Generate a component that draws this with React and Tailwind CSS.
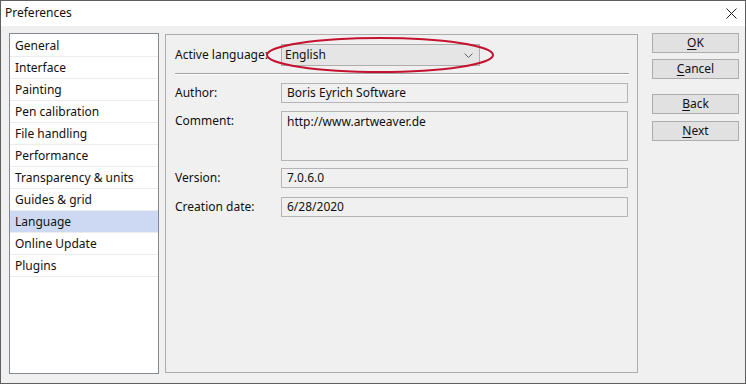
import { useState } from 'react';

const pages = [
  'General',
  'Interface',
  'Painting',
  'Pen calibration',
  'File handling',
  'Performance',
  'Transparency & units',
  'Guides & grid',
  'Language',
  'Online Update',
  'Plugins',
];

const Field = ({ label, value, tall, className = '' }) => (
  <div className={`flex ${tall ? 'items-start' : 'items-center'} ${className}`}>
    <div className={`w-[106px] shrink-0 ${tall ? 'pt-[1px]' : ''}`}>{label}</div>
    <div
      className={`flex-1 border border-[#b4b4b4] bg-[#f0f0f0] pl-[5px] ${
        tall ? 'h-[50px] pt-[1px]' : 'h-[20px] flex items-center'
      }`}
    >
      {value}
    </div>
  </div>
);

const DlgButton = ({ hot, rest, className = '' }) => (
  <button className={`h-[20px] w-[87px] border border-[#adadad] bg-[#e1e1e1] text-center leading-[18px] ${className}`}>
    <span className="underline underline-offset-2">{hot}</span>
    {rest}
  </button>
);

export default function App() {
  const [active, setActive] = useState('Language');

  return (
    <div
      className="w-[746px] h-[384px] border border-[#5f5f5f] bg-[#f0f0f0] text-[12px] text-[#111] flex flex-col"
      style={{ fontFamily: '"Noto Sans", "Liberation Sans", sans-serif' }}
    >
      {/* Title bar */}
      <div className="h-[25px] bg-white flex items-center justify-between pl-[4px] pr-[8px] pb-[1px] shrink-0">
        <span className="text-[12px]">Preferences</span>
        <svg width="11" height="11" viewBox="0 0 11 11">
          <path d="M0.5 0.5 L10.5 10.5 M10.5 0.5 L0.5 10.5" stroke="#222" strokeWidth="1" />
        </svg>
      </div>

      <div className="flex flex-1 pt-[7px] pl-[8px] pr-[6px] pb-[9px]">
        {/* Category list */}
        <div className="w-[150px] border border-[#828790] bg-white flex flex-col pt-[1px]">
          {pages.map((p) => (
            <div
              key={p}
              onClick={() => setActive(p)}
              className={`h-[22px] shrink-0 flex items-center pl-[5px] border-b border-[#ececec] ${
                active === p ? 'bg-[#cdd9f3]' : ''
              }`}
            >
              {p}
            </div>
          ))}
        </div>

        {/* Language page */}
        <div className="ml-[6px] w-[473px] mb-[1px] mt-[1px] border border-[#acacac] px-[9px] pt-[9px] flex flex-col relative">
          <div className="flex items-center h-[22px]">
            <div className="w-[106px] shrink-0">Active language:</div>
            <div className="w-[199px] h-[22px] border border-[#adadad] bg-[#e5e5e5] flex items-center justify-between pl-[3px] pr-[6px]">
              <span>English</span>
              <svg width="9" height="5" viewBox="0 0 9 5">
                <path d="M0.5 0.5 L4.5 4.5 L8.5 0.5" fill="none" stroke="#606060" strokeWidth="1" />
              </svg>
            </div>
          </div>
          <div className="mt-[7px] mr-[-1px] h-[2px] border-t border-[#a0a0a0] border-b border-b-white" />
          <Field label="Author:" value="Boris Eyrich Software" className="mt-[7px] h-[21px]" />
          <Field label="Comment:" value="http://www.artweaver.de" tall className="mt-[8px]" />
          <Field label="Version:" value="7.0.6.0" className="mt-[7px]" />
          <Field label="Creation date:" value="6/28/2020" className="mt-[9px]" />

          {/* red highlight ring */}
          <svg className="absolute left-[100px] top-0 pointer-events-none" width="232" height="40" viewBox="0 0 232 40">
            <ellipse cx="114" cy="20" rx="113" ry="17" fill="none" stroke="#c4122f" strokeWidth="2" />
          </svg>
        </div>

        {/* Dialog buttons */}
        <div className="ml-[14px] flex flex-col">
          <DlgButton hot="O" rest="K" />
          <DlgButton hot="C" rest="ancel" className="mt-[6px]" />
          <DlgButton hot="B" rest="ack" className="mt-[15px]" />
          <DlgButton hot="N" rest="ext" className="mt-[7px]" />
        </div>
      </div>
    </div>
  );
}
